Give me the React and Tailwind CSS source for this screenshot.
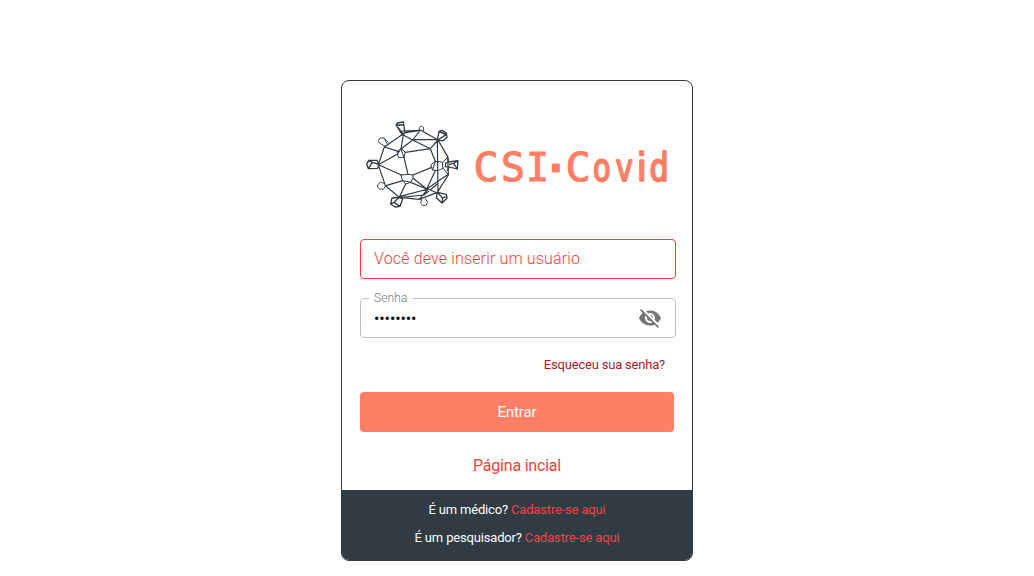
function VirusMark() {
  return (
    <svg viewBox="0 0 312 300" className="h-[100px] w-[104px] shrink-0" fill="none" stroke="#303b44" strokeWidth="3.6" strokeLinejoin="round" strokeLinecap="round">
      <path d="M126 59L73 96L55 149L76 212L118 247L178 253L232 232L265 180L263 125L234 75L183 46L128 48M134 53L180 47L158 75L123 102L130 60M130 60L158 75L211 101L234 75M158 74L232 74L234 232M73 96L117 110M136 112L211 101L226 139" />
      <path d="M57 148L112 118M57 150L124 180M132 127L144 178M159 180L215 157M128 197L78 212M137 207L118 247M152 202L200 222L226 167M118 245L204 222L178 253M204 222L232 234M200 222L265 178M118 248L192 240L232 207M159 190L200 222" />
      <path d="M112 110L123 100L136 112L132 127L117 128ZM112 118L123 102L132 127M124 180L144 178L159 180L159 190L152 202L137 207L128 197ZM128 197L152 202M215 157L212 150L226 139L246 141L249 159L235 167L218 165ZM226 139L218 165M249 142L263 126M249 159L265 180" strokeWidth="3" />
      <g strokeWidth="4">
        <path d="M108 30L112 24L130 21L135 54L127 60ZM108 30L131 30M112 36L130 56" />
        <path d="M57 148L51 136L26 136L20 148L25 161L53 160ZM26 136L37 142L25 161M37 142L57 148" />
        <path d="M232 76L237 49L246 46L259 55L261 67L250 77ZM237 49L258 59L234 75" />
        <path d="M118 247L96 249L92 267L105 276L120 274L128 252ZM118 247L102 262L92 267M102 262L120 274" />
        <path d="M232 232L229 248L246 264L261 250L259 238ZM232 232L248 249L261 244M248 249L246 264" />
        <path d="M263 126L266 141L294 137L292 162L268 156L262 166M266 141L257 144L256 155L268 156M268 148L281 145L294 137M281 145L292 162" strokeWidth="3.8" />
      </g>
      <path d="M76 94L58 84L55 76L61 69L72 69L84 82M72 69L82 88M178 46L178 37L184 33L191 38L190 48M76 214L70 223L60 222L52 216L54 208L61 202L74 205M185 253L182 265L189 272L199 270L203 262L196 251" strokeWidth="2.8" />
    </svg>
  );
}

function Wordmark() {
  return (
    <svg viewBox="0 0 204 64" className="ml-[6px] h-[64px] w-[204px] overflow-visible" fill="#ff7f66" stroke="#ff7f66" strokeWidth="1.2" strokeLinejoin="round" fontFamily="'DejaVu Sans Mono', monospace" fontSize="39.5">
      <text transform="translate(3.6 47.5) scale(1.05 1)">C</text>
      <text x="31" y="47.5">S</text>
      <text transform="translate(56.2 47.5) scale(0.95 1)">I</text>
      <text x="74" y="48.6" strokeWidth="3.2">·</text>
      <text transform="translate(95.4 47.5) scale(1.05 1)">C</text>
      <text transform="translate(122.6 47.5) scale(0.78 1)" strokeWidth="1.8">o</text>
      <text transform="translate(144.9 47.5) scale(0.78 1)" strokeWidth="1.8">v</text>
      <text x="166.2" y="47.5" strokeWidth="1.5" fontFamily="'DejaVu Sans', sans-serif">i</text>
      <text transform="translate(179.3 47.5) scale(0.83 1)" strokeWidth="1.8">d</text>
    </svg>
  );
}

function HiddenEye() {
  return (
    <svg viewBox="0 0 24 24" className="size-6" fill="#757575">
      <path d="M12 7c2.76 0 5 2.24 5 5 0 .65-.13 1.26-.36 1.83l2.92 2.92c1.51-1.26 2.7-2.89 3.43-4.75-1.73-4.39-6-7.5-11-7.5-1.4 0-2.74.25-3.98.7l2.16 2.16C10.74 7.13 11.35 7 12 7zM2 4.27l2.28 2.28.46.46C3.08 8.3 1.78 10.02 1 12c1.73 4.39 6 7.5 11 7.5 1.55 0 3.03-.3 4.38-.84l.42.42L19.73 22 21 20.73 3.27 3 2 4.27zM7.53 9.8l1.55 1.55c-.05.21-.08.43-.08.65 0 1.66 1.34 3 3 3 .22 0 .44-.03.65-.08l1.55 1.55c-.67.33-1.41.53-2.2.53-2.76 0-5-2.24-5-5 0-.79.2-1.53.53-2.2zm4.31-.78l3.15 3.15.02-.16c0-1.66-1.34-3-3-3l-.17.01z" />
    </svg>
  );
}

export default function App() {
  return (
    <main className="flex h-screen justify-center overflow-hidden bg-white pt-20 font-['Roboto',sans-serif]">
      <section className="flex h-[481px] w-[352px] flex-col overflow-hidden rounded-lg border border-[#303b44] bg-white">
        <div className="flex flex-1 flex-col pl-[18px]">
          <header className="mt-[34px] flex h-[100px] items-center">
            <VirusMark />
            <Wordmark />
          </header>
          <div className="mt-[24px] flex h-10 w-[316px] items-center rounded border border-[#f44336] px-[13px] text-base font-light tracking-[0.15px] text-[#f44336]">
            Você deve inserir um usuário
          </div>
          <div className="relative mt-[19px] flex h-10 w-[316px] items-center justify-between rounded border border-[#c0c0c0] pr-[13px] pl-[13px]">
            <label className="absolute -top-[9px] left-[8px] bg-white px-[5px] text-xs leading-4 font-light tracking-[0.15px] text-[#757575]">Senha</label>
            <span className="pt-0.5 text-base tracking-[-0.1px] text-black">••••••••</span>
            <HiddenEye />
          </div>
          <a className="mt-[18px] mr-[27px] self-end text-[13px] leading-[18px] tracking-[-0.2px] text-[#a91b29]">Esqueceu sua senha?</a>
          <button className="mt-[18px] h-10 w-[314px] rounded bg-[#ff7f66] text-[15px] tracking-[-0.1px] text-white">Entrar</button>
          <a className="mt-[22px] w-[314px] text-center text-base leading-6 tracking-[-0.2px] text-[#f44336]">Página incial</a>
        </div>
        <footer className="flex h-[70px] shrink-0 flex-col items-center gap-[10px] bg-[#303b44] pt-[11px] text-[13px] leading-[18px] tracking-[-0.17px] text-white">
          <p>É um médico? <a className="text-[#e64a45]">Cadastre-se aqui</a></p>
          <p>É um pesquisador? <a className="text-[#e64a45]">Cadastre-se aqui</a></p>
        </footer>
      </section>
    </main>
  );
}
